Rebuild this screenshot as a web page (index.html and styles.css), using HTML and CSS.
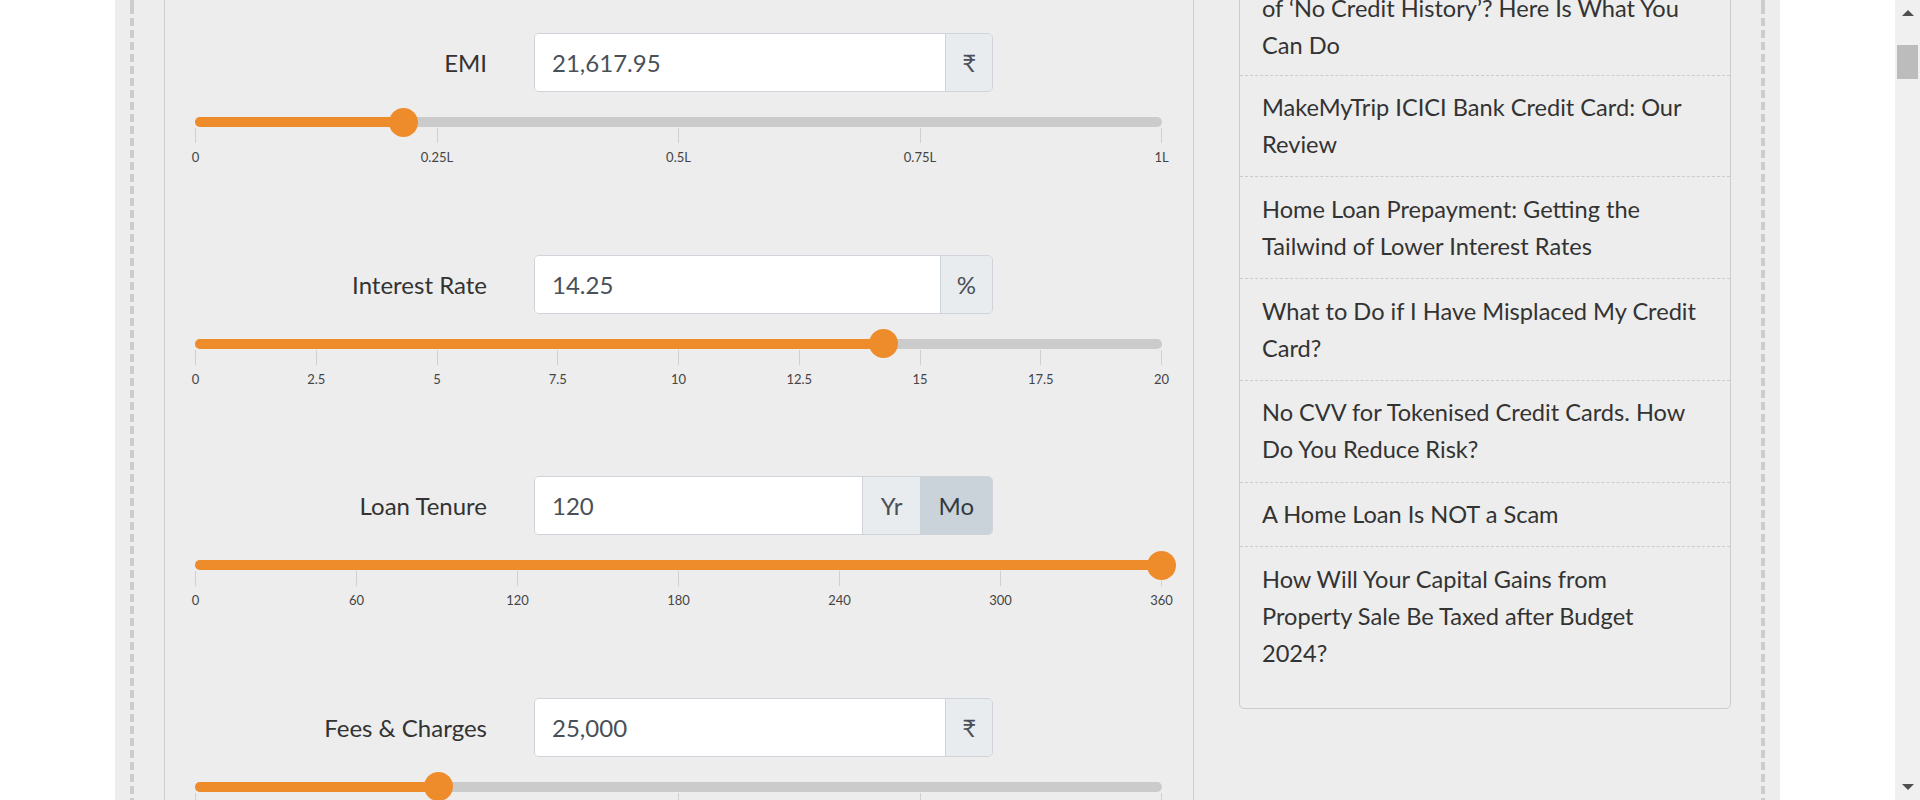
FILE: index.html
```html
<!DOCTYPE html>
<html lang="en">
<head>
<meta charset="utf-8">
<title>Loan EMI Calculator</title>
<link rel="stylesheet" href="styles.css">
</head>
<body>
<div class="viewport">
  <div class="main-area">
    <main class="page">
      <div class="dash"></div>
      <div class="columns">
        <section class="card">
          <div class="field">
            <div class="form-row">
              <label class="label">EMI</label>
              <div class="input-group">
                <input class="input" type="text" value="21,617.95">
                <span class="addon">₹</span>
              </div>
            </div>
            <div class="slider">
              <div class="fill" style="width:21.62%"><span class="thumb"></span></div>
            </div>
            <div class="ruler">
              <div class="tick"><span class="tick-line"></span><span class="tick-label">0</span></div>
              <div class="tick"><span class="tick-line"></span><span class="tick-label">0.25L</span></div>
              <div class="tick"><span class="tick-line"></span><span class="tick-label">0.5L</span></div>
              <div class="tick"><span class="tick-line"></span><span class="tick-label">0.75L</span></div>
              <div class="tick"><span class="tick-line"></span><span class="tick-label">1L</span></div>
            </div>
          </div>

          <div class="field">
            <div class="form-row">
              <label class="label">Interest Rate</label>
              <div class="input-group">
                <input class="input" type="text" value="14.25">
                <span class="addon">%</span>
              </div>
            </div>
            <div class="slider">
              <div class="fill" style="width:71.25%"><span class="thumb"></span></div>
            </div>
            <div class="ruler">
              <div class="tick"><span class="tick-line"></span><span class="tick-label">0</span></div>
              <div class="tick"><span class="tick-line"></span><span class="tick-label">2.5</span></div>
              <div class="tick"><span class="tick-line"></span><span class="tick-label">5</span></div>
              <div class="tick"><span class="tick-line"></span><span class="tick-label">7.5</span></div>
              <div class="tick"><span class="tick-line"></span><span class="tick-label">10</span></div>
              <div class="tick"><span class="tick-line"></span><span class="tick-label">12.5</span></div>
              <div class="tick"><span class="tick-line"></span><span class="tick-label">15</span></div>
              <div class="tick"><span class="tick-line"></span><span class="tick-label">17.5</span></div>
              <div class="tick"><span class="tick-line"></span><span class="tick-label">20</span></div>
            </div>
          </div>

          <div class="field">
            <div class="form-row">
              <label class="label">Loan Tenure</label>
              <div class="input-group">
                <input class="input" type="text" value="120">
                <span class="addon addon-unit">Yr</span>
                <span class="addon addon-unit addon-active">Mo</span>
              </div>
            </div>
            <div class="slider">
              <div class="fill" style="width:100%"><span class="thumb"></span></div>
            </div>
            <div class="ruler">
              <div class="tick"><span class="tick-line"></span><span class="tick-label">0</span></div>
              <div class="tick"><span class="tick-line"></span><span class="tick-label">60</span></div>
              <div class="tick"><span class="tick-line"></span><span class="tick-label">120</span></div>
              <div class="tick"><span class="tick-line"></span><span class="tick-label">180</span></div>
              <div class="tick"><span class="tick-line"></span><span class="tick-label">240</span></div>
              <div class="tick"><span class="tick-line"></span><span class="tick-label">300</span></div>
              <div class="tick"><span class="tick-line"></span><span class="tick-label">360</span></div>
            </div>
          </div>

          <div class="field">
            <div class="form-row">
              <label class="label">Fees &amp; Charges</label>
              <div class="input-group">
                <input class="input" type="text" value="25,000">
                <span class="addon">₹</span>
              </div>
            </div>
            <div class="slider">
              <div class="fill" style="width:25.25%"><span class="thumb"></span></div>
            </div>
            <div class="ruler">
              <div class="tick"><span class="tick-line"></span><span class="tick-label">0</span></div>
              <div class="tick"><span class="tick-line"></span><span class="tick-label">25K</span></div>
              <div class="tick"><span class="tick-line"></span><span class="tick-label">50K</span></div>
              <div class="tick"><span class="tick-line"></span><span class="tick-label">75K</span></div>
              <div class="tick"><span class="tick-line"></span><span class="tick-label">1L</span></div>
            </div>
          </div>
        </section>

        <aside class="sidebar">
          <ul class="posts">
            <li class="post post-first"><a href="#">of ‘No Credit History’? Here Is What You Can Do</a></li>
            <li class="post"><a href="#">MakeMyTrip ICICI Bank Credit Card: Our Review</a></li>
            <li class="post"><a href="#">Home Loan Prepayment: Getting the Tailwind of Lower Interest Rates</a></li>
            <li class="post"><a href="#">What to Do if I Have Misplaced My Credit Card?</a></li>
            <li class="post"><a href="#">No CVV for Tokenised Credit Cards. How Do You Reduce Risk?</a></li>
            <li class="post"><a href="#">A Home Loan Is NOT a Scam</a></li>
            <li class="post"><a href="#">How Will Your Capital Gains from Property Sale Be Taxed after Budget 2024?</a></li>
          </ul>
        </aside>
      </div>
      <div class="dash"></div>
    </main>
  </div>
  <div class="scrollbar">
    <div class="sb-btn"><span class="arrow-up"></span></div>
    <div class="sb-track"><div class="sb-thumb"></div></div>
    <div class="sb-btn"><span class="arrow-down"></span></div>
  </div>
</div>
</body>
</html>
```

FILE: styles.css
```css
* { box-sizing: border-box; }

html, body {
  margin: 0;
  padding: 0;
  height: 100%;
}

body {
  background: #ffffff;
  font-family: Lato, "Noto Sans", "DejaVu Sans", sans-serif;
  color: #333333;
  overflow: hidden;
}

.viewport {
  display: flex;
  height: 100vh;
}

.main-area {
  flex: 1;
  display: flex;
  justify-content: center;
  background: #ffffff;
}

.page {
  width: 1665px;
  height: 100%;
  background: #ededed;
  padding: 0 15px;
  display: flex;
}

.dash {
  width: 4px;
  flex: none;
  background-image: repeating-linear-gradient(to bottom, #cccccc 0 8px, transparent 8px 12px);
  background-position: 0 6px;
}

.columns {
  flex: 1;
  display: flex;
  align-items: flex-start;
  gap: 45px;
  padding: 0 30px;
}

/* ---------- calculator card ---------- */
.card {
  width: 1030px;
  flex: none;
  border: 1px solid #cfcfcf;
  border-top: none;
  padding: 33px 31px 0 30px;
}

.field {
  margin-bottom: 89.5px;
}

.form-row {
  display: flex;
  align-items: center;
  height: 59px;
}

.label {
  width: 292px;
  text-align: right;
  font-size: 24px;
  color: #333333;
  margin-right: 47px;
}

.input-group {
  display: flex;
  width: 459px;
  height: 59px;
  border: 1px solid #ced4da;
  border-radius: 5px;
  overflow: hidden;
}

.input {
  flex: 1;
  min-width: 0;
  border: none;
  outline: none;
  background: #ffffff;
  font-family: inherit;
  font-size: 24px;
  color: #495057;
  padding: 0 17px;
}

.addon {
  display: flex;
  align-items: center;
  padding: 0 16px;
  background: #e9ecef;
  border-left: 1px solid #ced4da;
  font-size: 24px;
  color: #495057;
}

.addon + .addon { border-left: none; }

.addon-unit {
  padding: 0 18px;
}

.addon-active {
  background: #cbd3da;
  color: #333a40;
}

.slider {
  margin-top: 25px;
  height: 10px;
  border-radius: 5px;
  background: #cbcbcb;
  display: flex;
}

.fill {
  height: 10px;
  border-radius: 5px;
  background: #ee8c2c;
  position: relative;
}

.thumb {
  position: absolute;
  right: -14px;
  top: -9.5px;
  width: 29px;
  height: 29px;
  border-radius: 50%;
  background: #ee8c2c;
}

.ruler {
  margin-top: 1px;
  display: flex;
  justify-content: space-between;
}

.tick {
  width: 1px;
  display: flex;
  flex-direction: column;
  align-items: center;
}

.tick-line {
  width: 1px;
  height: 15px;
  background: #d0d0d0;
}

.tick-label {
  margin-top: 6px;
  font-size: 13px;
  line-height: 16px;
  color: #444444;
  white-space: nowrap;
}

/* ---------- sidebar ---------- */
.sidebar {
  width: 492px;
  flex: none;
  margin-top: -24.5px;
  border: 1px solid #cccccc;
  border-radius: 5px;
  padding-bottom: 23.5px;
}

.posts {
  list-style: none;
  margin: 0;
  padding: 0;
}

.post {
  padding: 13.6px 30px 13.6px 22px;
  border-bottom: 1px dashed #cccccc;
  font-size: 23.6px;
  line-height: 36.75px;
}

.post-first {
  padding-bottom: 11.2px;
}

.post:last-child { border-bottom: none; }

.post a {
  color: #333333;
  text-decoration: none;
}

/* ---------- scrollbar ---------- */
.scrollbar {
  width: 25px;
  flex: none;
  background: #f0f0f0;
  display: flex;
  flex-direction: column;
}

.sb-btn {
  height: 26px;
  display: flex;
  align-items: center;
  justify-content: center;
}

.arrow-up {
  width: 0;
  height: 0;
  border-left: 6px solid transparent;
  border-right: 6px solid transparent;
  border-bottom: 6px solid #505050;
}

.arrow-down {
  width: 0;
  height: 0;
  border-left: 6px solid transparent;
  border-right: 6px solid transparent;
  border-top: 6px solid #505050;
}

.sb-track {
  flex: 1;
  padding: 19px 2px 0;
}

.sb-thumb {
  height: 34px;
  background: #bcbcbc;
}
```
